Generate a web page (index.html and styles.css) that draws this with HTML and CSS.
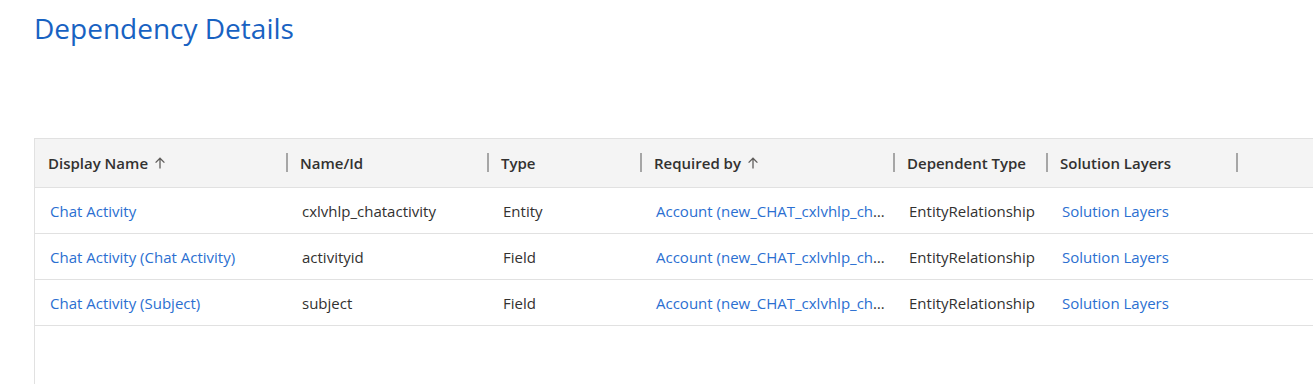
FILE: index.html
```html
<!DOCTYPE html>
<html lang="en">

<head>
    <meta charset="UTF-8">
    <meta name="viewport" content="width=device-width, initial-scale=1.0">
    <title>Dependency Details</title>
    <link rel="stylesheet" href="styles.css">
</head>

<body>
    <header class="page-header">
        <h1>Dependency Details</h1>
    </header>

    <section class="grid">
        <div class="grid-row grid-head">
            <div class="cell">Display Name <svg class="sort" viewBox="0 0 12 12"><path d="M6 11.5V1.2M1.6 5.6L6 1.2l4.4 4.4" /></svg></div>
            <div class="cell sep">Name/Id</div>
            <div class="cell sep">Type</div>
            <div class="cell sep">Required by <svg class="sort" viewBox="0 0 12 12"><path d="M6 11.5V1.2M1.6 5.6L6 1.2l4.4 4.4" /></svg></div>
            <div class="cell sep">Dependent Type</div>
            <div class="cell sep">Solution Layers</div>
            <div class="cell sep"></div>
        </div>

        <div class="grid-row">
            <div class="cell"><a href="#">Chat Activity</a></div>
            <div class="cell">cxlvhlp_chatactivity</div>
            <div class="cell">Entity</div>
            <div class="cell"><a href="#">Account (new_CHAT_cxlvhlp_chatactivity_Account)</a></div>
            <div class="cell">EntityRelationship</div>
            <div class="cell"><a href="#">Solution Layers</a></div>
            <div class="cell"></div>
        </div>

        <div class="grid-row">
            <div class="cell"><a href="#">Chat Activity (Chat Activity)</a></div>
            <div class="cell">activityid</div>
            <div class="cell">Field</div>
            <div class="cell"><a href="#">Account (new_CHAT_cxlvhlp_chatactivity_Account)</a></div>
            <div class="cell">EntityRelationship</div>
            <div class="cell"><a href="#">Solution Layers</a></div>
            <div class="cell"></div>
        </div>

        <div class="grid-row">
            <div class="cell"><a href="#">Chat Activity (Subject)</a></div>
            <div class="cell">subject</div>
            <div class="cell">Field</div>
            <div class="cell"><a href="#">Account (new_CHAT_cxlvhlp_chatactivity_Account)</a></div>
            <div class="cell">EntityRelationship</div>
            <div class="cell"><a href="#">Solution Layers</a></div>
            <div class="cell"></div>
        </div>
    </section>
</body>

</html>
```

FILE: styles.css
```css
* {
    margin: 0;
    padding: 0;
    box-sizing: border-box;
}

html {
    background-color: #ffffff;
    color: #323130;
    font-family: 'Open Sans', 'Arial', sans-serif;
    font-size: 15px;
}

body {
    overflow: hidden;
    height: 384px;
}

.page-header {
    padding: 10px 34px 0;
    height: 138px;
}

h1 {
    font-size: 28px;
    font-weight: 400;
    color: #1862c2;
    line-height: 36px;
}

.grid {
    margin-left: 34px;
    width: 1320px;
    height: 260px;
    border-left: 1px solid #e1e1e1;
    border-top: 1px solid #e1e1e1;
}

.grid-row {
    display: grid;
    grid-template-columns: 252px 201px 153px 253px 153px 190px 1fr;
    height: 46px;
    border-bottom: 1px solid #e1e1e1;
    align-items: center;
}

.grid-head {
    height: 49px;
    background-color: #f4f4f4;
    font-weight: 600;
    align-items: stretch;
}

.cell {
    position: relative;
    padding: 0 2px 0 15px;
    white-space: nowrap;
    overflow: hidden;
    text-overflow: ellipsis;
}

.grid-head .cell {
    display: flex;
    align-items: center;
    padding-left: 13px;
    overflow: visible;
}

.sep::before {
    content: "";
    position: absolute;
    left: -1px;
    top: 50%;
    margin-top: -10px;
    width: 2px;
    height: 19px;
    background-color: #a6a6a6;
}

.sort {
    width: 12px;
    height: 12px;
    margin-left: 6px;
    fill: none;
    stroke: #605e5c;
    stroke-width: 1.3;
}

a {
    color: #2b6fd1;
    text-decoration: none;
}
```
